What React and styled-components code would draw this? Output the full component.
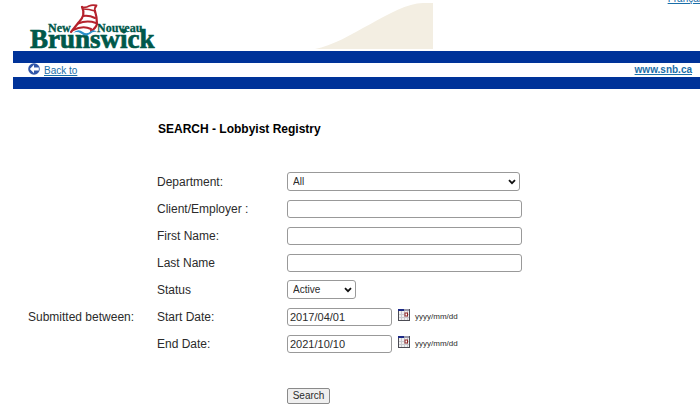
// App.jsx
import React from "react";
import styled, { createGlobalStyle } from "styled-components";

const GlobalStyle = createGlobalStyle`
  body {
    margin: 0;
    background: #fff;
    color: #2b2b2b;
    font-family: "Liberation Sans", Arial, sans-serif;
    font-size: 12px;
  }
  * {
    box-sizing: border-box;
  }
`;

const Logo = () => (
  <LogoSvg viewBox="0 0 130 51" role="img" aria-label="New Nouveau Brunswick">
    <g
      fill="#00584a"
      stroke="#00584a"
      fontFamily='"Liberation Serif", "Times New Roman", serif'
      fontWeight="bold"
    >
      <text x="20" y="32" fontSize="12" strokeWidth="0.3">
        New
      </text>
      <text x="69" y="32" fontSize="12" strokeWidth="0.3">
        Nouveau
      </text>
      <text x="2" y="48" fontSize="27" strokeWidth="0.7">
        Brunswick
      </text>
    </g>
    <path d="M54 7 L68 6 L69 24 L63 31 L44 31 L55 16 Z" fill="#fff" />
    <g fill="none" stroke="#b5222c" strokeLinecap="round" strokeLinejoin="round">
      <path d="M54 7 Q58 8 61 6 Q64 4.500 68.500 5.500 Q66 8 67 12" strokeWidth="1.8" />
      <path d="M67 11 Q69 17 69 24 Q68 28 63 31" strokeWidth="2.2" />
      <path d="M54 7 Q58 15 51 22 L43 32" strokeWidth="2.2" />
      <path d="M55 9 Q61 9 67 11" strokeWidth="1.4" />
      <path d="M55 16 Q61 15 67 18" strokeWidth="2" />
      <path d="M50 23.500 Q59 20 68 23" strokeWidth="2" />
      <path d="M45 30 Q55 25 63 29" strokeWidth="2" />
    </g>
    <path
      d="M45 33 Q50 28 55 32 Q59 35 63 31 Q66 29 69 32 Q65 31 62 34 Q57 37 53 33.500 Q49 31 45 33"
      fill="#2a8fc9"
    />
  </LogoSvg>
);

const BackIcon = () => (
  <svg width="12" height="12" viewBox="0 0 12 12" aria-hidden="true">
    <circle cx="6" cy="6" r="5.8" fill="#3156a8" />
    <path d="M1.8 6 L6 1.8 V4.4 H10.8 V7.6 H6 V10.2 Z" fill="#fff" />
  </svg>
);

const CalendarIcon = () => (
  <svg width="12" height="12" viewBox="0 0 12 12" aria-hidden="true">
    <rect width="12" height="12" fill="#f0f0f0" />
    <path d="M0 0 H12 V2 H0 Z" fill="#9a9aaa" />
    <path d="M0 0 H6 V2 H0 Z" fill="#1d2a86" />
    <path
      d="M3.5 2 V11 M6.5 2 V11 M9.5 2 V11 M0 5.500 H11 M0 8.500 H11"
      stroke="#c9c9cf"
    />
    <rect x="7" y="4" width="2.5" height="3" fill="#fff" stroke="#8e2323" />
    <path d="M0.5 2 V12 M0 11.5 H12 M11.5 0 V12" stroke="#4c4c54" />
  </svg>
);

const DateField = ({ id, label, value }) => (
  <>
    <Label htmlFor={id}>{label}</Label>
    <Field>
      <TextInput id={id} $short defaultValue={value} />
      <IconButton type="button" aria-label={`Choose ${label}`}>
        <CalendarIcon />
      </IconButton>
      <Hint>yyyy/mm/dd</Hint>
    </Field>
  </>
);

export default class App extends React.Component {
  render() {
    return (
      <Page>
        <GlobalStyle />
        <Header>
          <Logo />
          <Swoosh viewBox="0 0 118 46" aria-hidden="true">
            <path d="M0 46 C34 40 77 1 108 0 H118 V46 Z" fill="#f3eee2" />
          </Swoosh>
          <LanguageLink href="#fr">Français</LanguageLink>
        </Header>
        <NavBar>
          <BackLink href="#back">
            <BackIcon />
            <span>Back to</span>
          </BackLink>
          <SiteLink href="#snb">www.snb.ca</SiteLink>
        </NavBar>
        <Main>
          <Title>SEARCH - Lobbyist Registry</Title>
          <Form onSubmit={(e) => e.preventDefault()}>
            <Label htmlFor="department">Department:</Label>
            <Field>
              <Select id="department" $wide>
                <option>All</option>
              </Select>
            </Field>
            <Label htmlFor="client">Client/Employer :</Label>
            <Field>
              <TextInput id="client" />
            </Field>
            <Label htmlFor="first">First Name:</Label>
            <Field>
              <TextInput id="first" />
            </Field>
            <Label htmlFor="last">Last Name</Label>
            <Field>
              <TextInput id="last" />
            </Field>
            <Label htmlFor="status">Status</Label>
            <Field>
              <Select id="status">
                <option>Active</option>
              </Select>
            </Field>
            <GroupLabel>Submitted between:</GroupLabel>
            <DateField id="start" label="Start Date:" value="2017/04/01" />
            <DateField id="end" label="End Date:" value="2021/10/10" />
            <Actions>
              <SearchButton type="submit">Search</SearchButton>
            </Actions>
          </Form>
        </Main>
      </Page>
    );
  }
}

const Page = styled.div`
  padding-left: 13px;
  overflow: hidden;
`;

const Header = styled.header`
  display: flex;
  align-items: flex-start;
  height: 51px;
  padding-left: 15px;
`;

const LogoSvg = styled.svg`
  width: 130px;
  height: 51px;
  flex: none;
`;

const Swoosh = styled.svg`
  width: 118px;
  height: 46px;
  margin: 3px 0 0 157px;
  flex: none;
`;

const LanguageLink = styled.a`
  margin: -8px -6px 0 auto;
  color: #1a6ea8;
  font-size: 10px;
  line-height: 14px;
`;

const NavBar = styled.nav`
  display: flex;
  justify-content: space-between;
  align-items: center;
  height: 38px;
  padding: 0 8px 0 15px;
  border: solid #003399;
  border-width: 12px 0;
`;

const BackLink = styled.a`
  display: flex;
  gap: 4px;
  color: #1a6ea8;
  font-size: 10px;
  line-height: 14px;

  span {
    padding-top: 1px;
  }
`;

const SiteLink = styled.a`
  color: #1a6ea8;
  font-size: 10px;
  line-height: 14px;
  font-weight: bold;
`;

const Main = styled.main`
  padding: 32px 15px 12px;
`;

const Title = styled.h1`
  margin: 0 0 31px 130px;
  color: #000;
  font-size: 12px;
  line-height: 16px;
`;

const Form = styled.form`
  display: grid;
  grid-template-columns: 129px 130px 1fr;
  grid-auto-rows: minmax(27px, auto);
  align-items: center;
`;

const Label = styled.label`
  grid-column: 2;
  line-height: 16px;
`;

const GroupLabel = styled.span`
  grid-column: 1;
  line-height: 16px;
`;

const Field = styled.div`
  grid-column: 3;
  display: flex;
  align-items: center;
`;

const TextInput = styled.input`
  width: ${(props) => (props.$short ? "105px" : "235px")};
  height: 18px;
  padding: 0 2px;
  border: 1px solid #999;
  border-radius: 3px;
  background: #fff;
  color: #2b2b2b;
  font-family: inherit;
  font-size: ${(props) => (props.$short ? "11px" : "10px")};
`;

const chevron =
  "data:image/svg+xml,%3Csvg xmlns='http://www.w3.org/2000/svg' viewBox='0 0 8 6'%3E%3Cpath d='M1 1.200 L4 4.200 L7 1.200' fill='none' stroke='%23111' stroke-width='1.8'/%3E%3C/svg%3E";

const Select = styled.select`
  appearance: none;
  width: ${(props) => (props.$wide ? "233px" : "69px")};
  height: 19px;
  padding: 0 14px 0 5px;
  border: 1px solid #999;
  border-radius: 3px;
  background: #fff url("${chevron}") no-repeat right 3px center / 8px 6px;
  color: #2b2b2b;
  font-family: inherit;
  font-size: 10px;
`;

const IconButton = styled.button`
  display: flex;
  margin: 0 5px 4px 6px;
  padding: 0;
  border: 0;
  background: none;
`;

const Hint = styled.span`
  font-size: 8px;
  line-height: 12px;
`;

const Actions = styled.div`
  grid-column: 3;
  display: flex;
  padding-top: 31px;
`;

const SearchButton = styled.button`
  width: 43px;
  height: 16px;
  padding: 0;
  border: 1px solid #8a8a8a;
  border-radius: 2px;
  background: #efefef;
  color: #2b2b2b;
  font-family: inherit;
  font-size: 10px;
  line-height: 14px;
`;
